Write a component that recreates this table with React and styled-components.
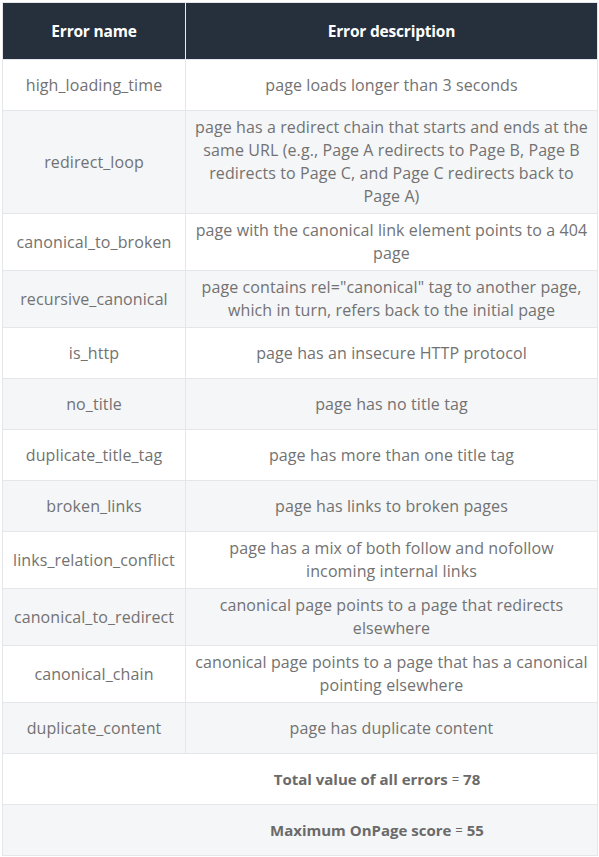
import React from "react";
import styled, { createGlobalStyle } from "styled-components";

const Global = createGlobalStyle`
  html, body { margin: 0; padding: 0; background: #fff; }
  body { padding: 2px 0 0 2px; font-family: "Open Sans", "Liberation Sans", sans-serif; }
`;

const Table = styled.div`
  width: 596px;
  box-sizing: border-box;
  border: 1px solid #e4e6e9;
  display: flex;
  flex-direction: column;
`;

const HeadRow = styled.div`
  display: grid;
  grid-template-columns: 183px 1fr;
  height: 56px;
  background: #262f3c;
  border-bottom: 1px solid #e4e8ee;
`;

const HeadCell = styled.div`
  display: flex;
  align-items: center;
  justify-content: center;
  color: #fff;
  font-weight: 700;
  font-size: 15.5px;
  letter-spacing: -0.2px;
  border-right: ${(p) => (p.$last ? "none" : "1px solid #e8ebef")};
`;

const Row = styled.div`
  display: grid;
  grid-template-columns: ${(p) => (p.$full ? "1fr" : "183px 1fr")};
  background: ${(p) => (p.$alt ? "#f5f6f8" : "#fff")};
  border-bottom: ${(p) => (p.$end ? "none" : "1px solid #e4e6e9")};
`;

const Cell = styled.div`
  min-height: 50px;
  box-sizing: border-box;
  padding: 5px 8px;
  display: flex;
  align-items: center;
  justify-content: center;
  text-align: center;
  color: #727272;
  font-size: 16px;
  letter-spacing: 0.1px;
  line-height: 23px;
  border-right: ${(p) => (p.$divider ? "1px solid #e4e6e9" : "none")};
`;

const SummaryCell = styled(Cell)`
  padding-left: 162px;
  font-weight: 700;
  font-size: 15px;
  letter-spacing: 0;
  color: #6a6a6a;
`;

const Eq = styled.span`
  font-weight: 400;
  font-size: 13px;
  margin: 0 4px;
`;

const rows = [
  ["high_loading_time", "page loads longer than 3 seconds"],
  [
    "redirect_loop",
    "page has a redirect chain that starts and ends at the same URL (e.g., Page A redirects to Page B, Page B redirects to Page C, and Page C redirects back to Page A)",
  ],
  ["canonical_to_broken", "page with the canonical link element points to a 404 page"],
  [
    "recursive_canonical",
    'page contains rel="canonical" tag to another page, which in turn, refers back to the initial page',
  ],
  ["is_http", "page has an insecure HTTP protocol"],
  ["no_title", "page has no title tag"],
  ["duplicate_title_tag", "page has more than one title tag"],
  ["broken_links", "page has links to broken pages"],
  ["links_relation_conflict", "page has a mix of both follow and nofollow incoming internal links"],
  ["canonical_to_redirect", "canonical page points to a page that redirects elsewhere"],
  ["canonical_chain", "canonical page points to a page that has a canonical pointing elsewhere"],
  ["duplicate_content", "page has duplicate content"],
];

export default function App() {
  return (
    <>
      <Global />
      <Table>
        <HeadRow>
          <HeadCell>Error name</HeadCell>
          <HeadCell $last>Error description</HeadCell>
        </HeadRow>
        {rows.map(([name, desc], i) => (
          <Row key={name} $alt={i % 2 === 1}>
            <Cell $divider>{name}</Cell>
            <Cell>{desc}</Cell>
          </Row>
        ))}
        <Row $full>
          <SummaryCell>
            Total value of all errors<Eq>=</Eq>78
          </SummaryCell>
        </Row>
        <Row $full $alt $end>
          <SummaryCell>
            Maximum OnPage score<Eq>=</Eq>55
          </SummaryCell>
        </Row>
      </Table>
    </>
  );
}
